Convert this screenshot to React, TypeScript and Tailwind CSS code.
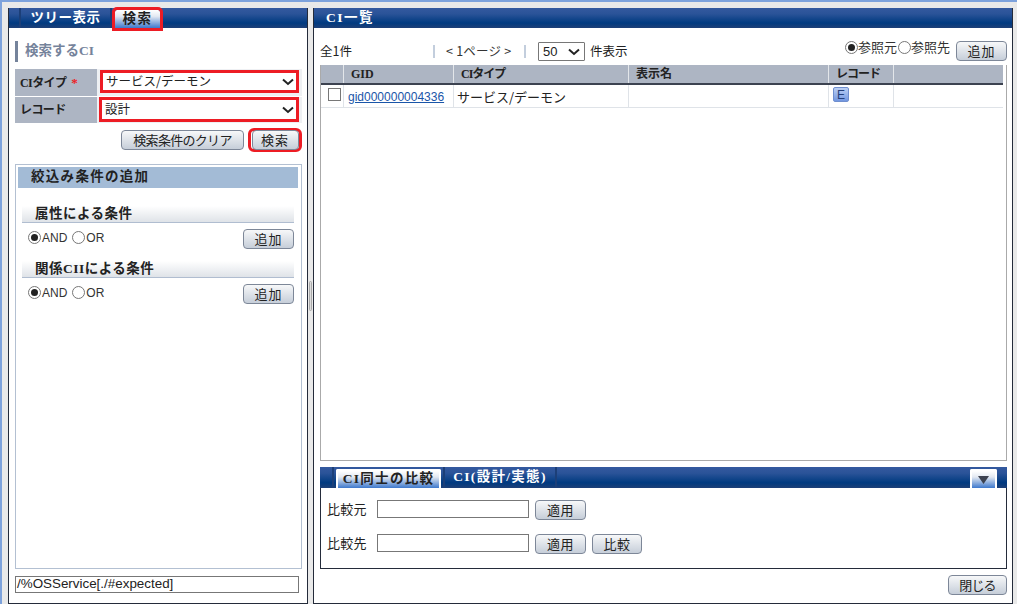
import React from "react";

const jp = "font-['Noto_Sans_CJK_JP',sans-serif]";
const ser = "font-['Liberation_Serif','Noto_Sans_CJK_JP',serif]";
const san = "font-['Liberation_Sans','Noto_Sans_CJK_JP',sans-serif]";

function Btn({ w, children, className = "" }: { w: string; children: React.ReactNode; className?: string }) {
  return (
    <div className={`${w} h-[20px] shrink-0 flex items-center justify-center rounded-[4px] border border-[#7d8798] bg-linear-to-b from-[#f7f8f9] to-[#c6ced9] text-[13px] leading-none text-[#222] pb-px ${className}`}>
      {children}
    </div>
  );
}

function Radio({ on }: { on?: boolean }) {
  return (
    <span className="w-[13px] h-[13px] shrink-0 rounded-full border border-[#777] bg-white flex items-center justify-center">
      {on && <span className="w-[7px] h-[7px] rounded-full bg-[#222]" />}
    </span>
  );
}

function Chevron() {
  return (
    <svg width="12" height="8" viewBox="0 0 12 8" className="shrink-0">
      <path d="M1 1.5 L6 6 L11 1.5" fill="none" stroke="#222" strokeWidth="2" />
    </svg>
  );
}

function Select({ value, className = "" }: { value: string; className?: string }) {
  return (
    <div className={`flex items-center justify-between bg-white border-[3px] border-[#ed1c24] pl-[3px] pr-[2px] text-[12.5px] text-[#222] ${className}`}>
      <span>{value}</span>
      <Chevron />
    </div>
  );
}

function SubHead({ children }: { children: React.ReactNode }) {
  return (
    <div className={`h-[17px] mx-[4px] pl-[13px] flex items-center border-b border-[#b0bdd0] bg-linear-to-b from-[#ffffff] to-[#dfe3e8] text-[13.5px] font-bold tracking-[0.5px] text-[#222] ${ser}`}>
      {children}
    </div>
  );
}

function RadioLine() {
  return (
    <div className={`mt-[6px] ml-[10px] mr-[4px] h-[20px] flex items-start justify-between ${san}`}>
      <div className="flex items-center text-[12px] text-[#333] h-[15px] mt-px">
        <Radio on />
        <span className="ml-px">AND</span>
        <span className="w-[5px]" />
        <Radio />
        <span className="ml-px">OR</span>
      </div>
      <Btn w="w-[51px]" className={`${jp} tracking-[1px]`}>追加</Btn>
    </div>
  );
}

export default function App() {
  const headerBg = "bg-[linear-gradient(#34599f,#2a5398_30%,#003a80_75%,#1d3f77)]";
  const activeTab = "bg-[linear-gradient(#ffffff,#e3e9f2_35%,#3d78cc)]";
  return (
    <div className={`w-[1017px] h-[604px] overflow-hidden flex bg-[#e9e9e9] border-t-2 border-l-2 border-[#7da2dc] pt-[6px] pl-[6px] text-[13px] text-[#222] ${jp}`}>
      {/* left panel */}
      <div className="w-[300px] h-[596px] shrink-0 flex flex-col bg-white border-x border-b border-[#242b3a]">
        <div className={`h-[20px] shrink-0 flex items-stretch ${headerBg}`}>
          <div className="w-[10px]" />
          <div className="w-[2px] bg-[#1c3f78]" />
          <div className={`w-[89px] flex items-center justify-center text-white font-bold text-[13.5px] tracking-[0.5px] ${ser}`}>ツリー表示</div>
          <div className="w-[2px] bg-[#1c3f78]" />
          <div className="w-[3px]" />
          <div className={`mt-[2px] w-[45px] flex items-center justify-center font-bold text-[13.5px] tracking-[1.5px] text-[#222] rounded-t-[2px] outline-[3px] outline-[#ed1c24] ${activeTab} ${ser}`}>検索</div>
        </div>
        <div className="flex-1 flex flex-col pl-[6px] pr-[5px] min-h-0">
          <div className={`mt-[13px] h-[21px] border-l-[3px] border-[#75839b] pl-[7px] flex items-center text-[13.5px] font-bold text-[#75839b] ${ser}`}>検索するCI</div>
          <div className="mt-[7px] flex flex-col gap-px">
            <div className="h-[27px] flex bg-[#eef0f3]">
              <div className={`w-[82px] shrink-0 bg-[#adb5c3] pl-[5px] flex items-center font-bold text-[12px] tracking-[-0.6px] ${ser}`}>
                CIタイプ<span className="text-[#ed1c24] ml-[5px] text-[13px]">*</span>
              </div>
              <Select value="サービス/デーモン" className="ml-[3px] mr-[3px] mt-px h-[23px] flex-1" />
            </div>
            <div className="h-[26px] flex bg-[#eef0f3]">
              <div className={`w-[82px] shrink-0 bg-[#adb5c3] pl-[5px] flex items-center font-bold text-[12px] tracking-[-0.6px] ${ser}`}>レコード</div>
              <Select value="設計" className="ml-[2px] mr-[3px] h-[25px] flex-1" />
            </div>
          </div>
          <div className="mt-[5px] flex justify-end items-center pr-[3px] gap-[4px]">
            <Btn w="w-[123px]" className="tracking-[-0.7px]">検索条件のクリア</Btn>
            <div className="w-[54px] h-[24px] -mr-[3px] flex items-center justify-center rounded-[6px] border-[3px] border-[#ed1c24] shrink-0">
              <Btn w="w-[47px]" className="tracking-[1px]">検索</Btn>
            </div>
          </div>
          <div className="mt-[12px] h-[405px] shrink-0 border border-[#b3c0d2] pt-[2px] pl-[2px] pr-[3px]">
            <div className={`h-[21px] bg-[#a3bbd6] pl-[13px] flex items-center text-[13.5px] font-bold tracking-[1.3px] text-[#222] ${ser}`}>絞込み条件の追加</div>
            <div className="h-[18px]" />
            <SubHead>属性による条件</SubHead>
            <RadioLine />
            <div className="h-[12px]" />
            <SubHead>関係CIIによる条件</SubHead>
            <RadioLine />
          </div>
          <div className={`mt-[7px] w-[284px] h-[17px] border border-[#777] px-[1px] flex items-center text-[13.4px] text-[#222] ${san}`}>/%OSService[./#expected]</div>
        </div>
      </div>

      {/* splitter */}
      <div className="w-[5px] shrink-0 flex items-center justify-center pb-[20px]">
        <div className="w-[3px] h-[30px] rounded-full border border-[#aaa] bg-[#ddd]" />
      </div>

      {/* right panel */}
      <div className="w-[700px] h-[596px] shrink-0 flex flex-col bg-white border-x border-b border-[#242b3a]">
        <div className={`h-[20px] shrink-0 pl-[12px] flex items-center text-white font-bold text-[13.5px] tracking-[1.5px] ${headerBg} ${ser}`}>CI一覧</div>
        <div className="flex-1 flex flex-col pl-[6px] pr-[5px] min-h-0">
          <div className="h-[37px] shrink-0 pt-[9px] flex items-center text-[12.5px]">
            <span className="w-[113px]">全1件</span>
            <span className="w-[2px] h-[13px] bg-[#c3cedd]" />
            <span className="w-[89px] pl-[11px] text-[#333] tracking-[0.2px]">&lt; 1ページ &gt;</span>
            <span className="w-[2px] h-[13px] bg-[#c3cedd]" />
            <div className="ml-[12px] mt-px w-[47px] h-[19px] border border-[#777] rounded-[1px] pl-[4px] pr-[4px] flex items-center justify-between">
              <span className={`text-[13px] ${san}`}>50</span>
              <Chevron />
            </div>
            <span className="ml-[5px]">件表示</span>
            <div className="flex-1" />
            <div className="flex items-center mb-[8px] text-[13px] text-[#333]">
              <Radio on /><span>参照元</span><span className="w-px" /><Radio /><span>参照先</span>
            </div>
            <Btn w="w-[51px]" className="ml-[6px] tracking-[1px]">追加</Btn>
          </div>
          <div className="h-[396px] shrink-0 border border-[#aaa] border-t-0 pr-[3px]">
            <div className={`h-[20px] flex bg-[#adb5c3] border-b-2 border-[#3c4250] text-[12px] font-bold text-[#222] ${ser}`}>
              <div className="w-[23px] border-r border-[#e3e6ea]" />
              <div className="w-[110px] pl-[7px] flex items-center border-r border-[#e3e6ea]">GID</div>
              <div className="w-[175px] pl-[7px] flex items-center border-r border-[#e3e6ea] tracking-[-1px]">CIタイプ</div>
              <div className="w-[200px] pl-[7px] flex items-center border-r border-[#e3e6ea]">表示名</div>
              <div className="w-[65px] pl-[7px] flex items-center border-r border-[#e3e6ea] tracking-[-1px]">レコード</div>
              <div className="flex-1" />
            </div>
            <div className="h-[23px] flex border-b border-[#dfe3e8] text-[13px]">
              <div className="w-[23px] border-r border-[#dfe3e8] pl-[7px] pt-[3px]">
                <div className="w-[13px] h-[13px] border border-[#777]" />
              </div>
              <div className={`w-[110px] pl-[4px] pt-[1px] flex items-center border-r border-[#dfe3e8] text-[12px] text-[#1a55a8] underline ${san}`}>gid000000004336</div>
              <div className="w-[175px] pl-[3px] pt-[1px] flex items-center border-r border-[#dfe3e8]">サービス/デーモン</div>
              <div className="w-[200px] border-r border-[#dfe3e8]" />
              <div className="w-[65px] pl-[4px] pt-[2px] border-r border-[#dfe3e8]">
                <div className={`w-[16px] h-[15px] rounded-[2px] border border-[#6f8fcf] bg-linear-to-b from-[#bcd0f4] to-[#7296e0] flex items-center justify-center text-[12px] leading-none text-[#24407a] ${san}`}>E</div>
              </div>
              <div className="flex-1" />
            </div>
          </div>
          <div className="mt-[6px] h-[102px] shrink-0 flex flex-col border border-[#242b3a] border-t-0">
            <div className={`h-[21px] shrink-0 flex items-stretch -mx-px ${headerBg}`}>
              <div className="w-[12px]" />
              <div className="w-[2px] bg-[#1c3f78]" />
              <div className={`mt-[2px] ml-[2px] w-[105px] flex items-center justify-center font-bold text-[13.5px] tracking-[1.3px] text-[#222] border-x-2 border-t-2 border-white rounded-t-[2px] ${activeTab} ${ser}`}>CI同士の比較</div>
              <div className="w-[2px] ml-[2px] bg-[#1c3f78]" />
              <div className={`w-[110px] flex items-center justify-center font-bold text-[13.5px] tracking-[1.3px] text-white ${ser}`}>CI(設計/実態)</div>
              <div className="w-[2px] bg-[#1c3f78]" />
              <div className="flex-1" />
              <div className={`mt-[2px] w-[27px] flex items-center justify-center border-x-2 border-t-2 border-white rounded-t-[2px] ${activeTab}`}>
                <svg width="11" height="8" viewBox="0 0 11 8"><path d="M0 0 H11 L5.5 8 Z" fill="#3c4250" /></svg>
              </div>
              <div className="w-[10px]" />
            </div>
            <div className="pt-[12px] pl-[6px] flex flex-col gap-[14px] text-[13px]">
              <div className="flex items-start h-[20px]">
                <span className="w-[50px] leading-[17px] tracking-[0.3px]">比較元</span>
                <div className="w-[152px] h-[18px] border border-[#777]" />
                <Btn w="w-[51px]" className="ml-[6px] tracking-[0.5px]">適用</Btn>
              </div>
              <div className="flex items-start h-[20px]">
                <span className="w-[50px] leading-[17px] tracking-[0.3px]">比較先</span>
                <div className="w-[152px] h-[18px] border border-[#777]" />
                <Btn w="w-[51px]" className="ml-[6px] tracking-[0.5px]">適用</Btn>
                <Btn w="w-[50px]" className="ml-[6px] tracking-[0.5px]">比較</Btn>
              </div>
            </div>
          </div>
          <div className="mt-[6px] flex justify-end">
            <Btn w="w-[59px]" className="tracking-[-0.8px]">閉じる</Btn>
          </div>
        </div>
      </div>
    </div>
  );
}
